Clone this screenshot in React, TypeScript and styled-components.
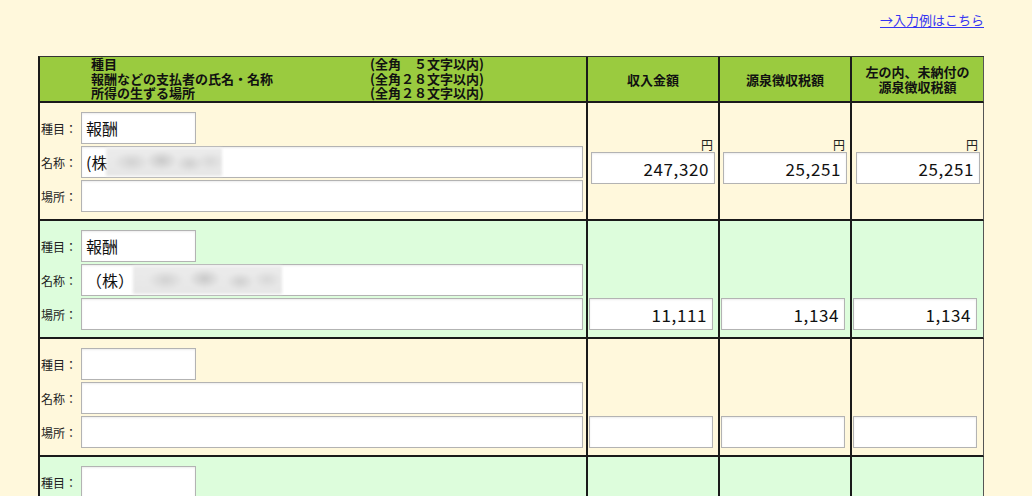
import React from "react";
import styled, { createGlobalStyle } from "styled-components";

const GlobalStyle = createGlobalStyle`
  html, body { margin: 0; padding: 0; background: #fff8dc; }
  body {
    font-family: "Noto Sans CJK JP", "Noto Sans", sans-serif;
    color: #111;
  }
`;

const Page = styled.div`
  width: 946px;
  padding: 11px 0 0 38px;
`;

const LinkBar = styled.div`
  display: flex;
  justify-content: flex-end;
  height: 20px;
  margin-bottom: 25px;
`;

const ExampleLink = styled.a`
  font-size: 13px;
  line-height: 18px;
  color: #3535f2;
  text-decoration: underline;
  text-underline-offset: 2px;
  cursor: pointer;
`;

const Table = styled.div`
  display: flex;
  flex-direction: column;
  border-top: 1px solid #333;
  border-left: 2px solid #1a1a1a;
`;

const Row = styled.div<{ $bg: string }>`
  display: grid;
  grid-template-columns: 548px 132px 132px 132px;
  background: ${(p) => p.$bg};
`;

const Cell = styled.div`
  box-sizing: border-box;
  border-right: 2px solid #1a1a1a;
  border-bottom: 2px solid #1a1a1a;
  &:last-child {
    border-right: 1px solid #555;
  }
`;

const HeadMain = styled(Cell)`
  height: 46px;
  display: grid;
  grid-template-columns: 279px auto;
  align-content: center;
  padding-left: 51px;
  font-size: 13px;
  font-weight: bold;
  line-height: 14.6px;
`;

const HeadCol = styled(Cell)`
  height: 46px;
  display: flex;
  align-items: center;
  justify-content: center;
  text-align: center;
  font-size: 13px;
  font-weight: bold;
  line-height: 15px;
`;

const EntryCell = styled(Cell)`
  display: grid;
  grid-template-columns: 40px auto;
  row-gap: 2px;
  align-items: center;
  justify-items: start;
  padding: 9px 0 7px 1px;
`;

const Label = styled.span`
  font-size: 12px;
  color: #222;
`;

const Field = styled.div<{ $w: number }>`
  position: relative;
  width: ${(p) => p.$w}px;
`;

const TextInput = styled.input<{ $right?: boolean }>`
  box-sizing: border-box;
  width: 100%;
  height: 32px;
  margin: 0;
  border: 1px solid #b3b3b3;
  border-radius: 0;
  box-shadow: inset 0 1px 2px rgba(0, 0, 0, 0.08);
  background: #fff;
  font-family: "Noto Sans CJK JP", "Noto Sans", sans-serif;
  font-size: 16px;
  color: #111;
  padding: 0 ${(p) => (p.$right ? "5px" : "4px")} 0 4px;
  text-align: ${(p) => (p.$right ? "right" : "left")};
  outline: none;
`;

const AmountInput = styled(TextInput)`
  font-size: 17px;
  letter-spacing: 0.6px;
  font-variant-numeric: tabular-nums;
`;

const Redaction = styled.span<{ $left: number; $w: number }>`
  position: absolute;
  top: 2px;
  left: ${(p) => p.$left}px;
  width: ${(p) => p.$w}px;
  height: 28px;
  background:
    radial-gradient(ellipse 18px 10px at 22% 50%, #d2d2d2, transparent),
    radial-gradient(ellipse 16px 10px at 48% 45%, #c9c9c9, transparent),
    radial-gradient(ellipse 14px 9px at 72% 55%, #d0d0d0, transparent),
    radial-gradient(ellipse 14px 9px at 90% 48%, #d8d8d8, transparent),
    linear-gradient(#ebebeb, #e6e6e6);
  filter: blur(1.5px);
  pointer-events: none;
`;

const AmountCell = styled(Cell)<{ $top?: boolean }>`
  display: flex;
  flex-direction: column;
  justify-content: ${(p) => (p.$top ? "center" : "flex-end")};
  align-items: ${(p) => (p.$top ? "flex-end" : "flex-start")};
  padding: ${(p) => (p.$top ? "0 3px 1px 0" : "0 0 7px 1px")};
`;

const Yen = styled.span`
  font-size: 12px;
  line-height: 15px;
  margin-right: 2px;
  color: #222;
`;

type Entry = {
  kind: string;
  name: string;
  redact?: { left: number; w: number };
  place: string;
  amounts: [string, string, string];
  yen?: boolean;
};

const entries: Entry[] = [
  {
    kind: "報酬",
    name: "(株",
    redact: { left: 25, w: 116 },
    place: "",
    amounts: ["247,320", "25,251", "25,251"],
    yen: true,
  },
  {
    kind: "報酬",
    name: "（株）",
    redact: { left: 52, w: 149 },
    place: "",
    amounts: ["11,111", "1,134", "1,134"],
  },
  { kind: "", name: "", place: "", amounts: ["", "", ""] },
  { kind: "", name: "", place: "", amounts: ["", "", ""] },
];

export default function App() {
  return (
    <>
      <GlobalStyle />
      <Page>
        <LinkBar>
          <ExampleLink>→入力例はこちら</ExampleLink>
        </LinkBar>
        <Table>
          <Row $bg="#9acb3f">
            <HeadMain>
              <span>種目</span>
              <span>(全角　５文字以内)</span>
              <span>報酬などの支払者の氏名・名称</span>
              <span>(全角２８文字以内)</span>
              <span>所得の生ずる場所</span>
              <span>(全角２８文字以内)</span>
            </HeadMain>
            <HeadCol>収入金額</HeadCol>
            <HeadCol>源泉徴収税額</HeadCol>
            <HeadCol>
              左の内、未納付の
              <br />
              源泉徴収税額
            </HeadCol>
          </Row>
          {entries.map((e, i) => (
            <Row key={i} $bg={i % 2 === 0 ? "#fff8dc" : "#ddfddc"}>
              <EntryCell>
                <Label>種目：</Label>
                <Field $w={115}>
                  <TextInput defaultValue={e.kind} />
                </Field>
                <Label>名称：</Label>
                <Field $w={502}>
                  <TextInput defaultValue={e.name} />
                  {e.redact && <Redaction $left={e.redact.left} $w={e.redact.w} />}
                </Field>
                <Label>場所：</Label>
                <Field $w={502}>
                  <TextInput defaultValue={e.place} />
                </Field>
              </EntryCell>
              {e.amounts.map((a, j) => (
                <AmountCell key={j} $top={e.yen}>
                  {e.yen && <Yen>円</Yen>}
                  <Field $w={124}>
                    <AmountInput $right defaultValue={a} />
                  </Field>
                </AmountCell>
              ))}
            </Row>
          ))}
        </Table>
      </Page>
    </>
  );
}
